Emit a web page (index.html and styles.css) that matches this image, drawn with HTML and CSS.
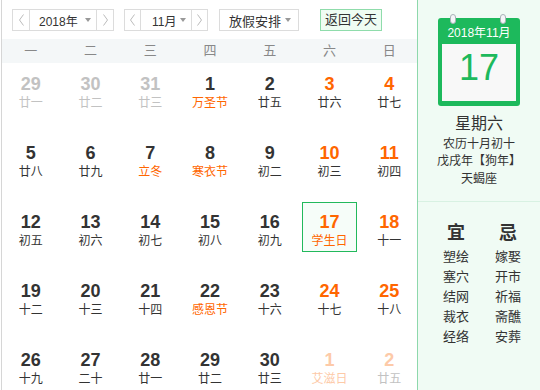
FILE: index.html
```html
<!DOCTYPE html>
<html lang="zh-CN">
<head>
<meta charset="utf-8">
<title>万年历</title>
<link rel="stylesheet" href="styles.css">
</head>
<body>
<div class="main">
  <div class="toolbar">
    <div class="sel sel-year">
      <span class="arr"><svg width="5" height="12" viewBox="0 0 5 12"><polyline points="4.5,0.5 0.5,6 4.5,11.5" fill="none" stroke="#bbb" stroke-width="1"/></svg></span>
      <span class="val">2018年<i class="caret"></i></span>
      <span class="arr"><svg width="5" height="12" viewBox="0 0 5 12"><polyline points="0.5,0.5 4.5,6 0.5,11.5" fill="none" stroke="#bbb" stroke-width="1"/></svg></span>
    </div>
    <div class="sel sel-month">
      <span class="arr"><svg width="5" height="12" viewBox="0 0 5 12"><polyline points="4.5,0.5 0.5,6 4.5,11.5" fill="none" stroke="#bbb" stroke-width="1"/></svg></span>
      <span class="val">11月<i class="caret"></i></span>
      <span class="arr"><svg width="5" height="12" viewBox="0 0 5 12"><polyline points="0.5,0.5 4.5,6 0.5,11.5" fill="none" stroke="#bbb" stroke-width="1"/></svg></span>
    </div>
    <div class="sel sel-holiday"><span class="val">放假安排<i class="caret"></i></span></div>
    <div class="today-btn">返回今天</div>
  </div>
  <div class="week">
    <span>一</span><span>二</span><span>三</span><span>四</span><span>五</span><span>六</span><span>日</span>
  </div>
  <div class="days">
    <div class="day other"><div class="num">29</div><div class="lun">廿一</div></div>
    <div class="day other"><div class="num">30</div><div class="lun">廿二</div></div>
    <div class="day other"><div class="num">31</div><div class="lun">廿三</div></div>
    <div class="day"><div class="num">1</div><div class="lun fest">万圣节</div></div>
    <div class="day"><div class="num">2</div><div class="lun">廿五</div></div>
    <div class="day wkend"><div class="num">3</div><div class="lun">廿六</div></div>
    <div class="day wkend"><div class="num">4</div><div class="lun">廿七</div></div>

    <div class="day"><div class="num">5</div><div class="lun">廿八</div></div>
    <div class="day"><div class="num">6</div><div class="lun">廿九</div></div>
    <div class="day"><div class="num">7</div><div class="lun fest">立冬</div></div>
    <div class="day"><div class="num">8</div><div class="lun fest">寒衣节</div></div>
    <div class="day"><div class="num">9</div><div class="lun">初二</div></div>
    <div class="day wkend"><div class="num">10</div><div class="lun">初三</div></div>
    <div class="day wkend"><div class="num">11</div><div class="lun">初四</div></div>

    <div class="day"><div class="num">12</div><div class="lun">初五</div></div>
    <div class="day"><div class="num">13</div><div class="lun">初六</div></div>
    <div class="day"><div class="num">14</div><div class="lun">初七</div></div>
    <div class="day"><div class="num">15</div><div class="lun">初八</div></div>
    <div class="day"><div class="num">16</div><div class="lun">初九</div></div>
    <div class="day wkend today"><div class="num">17</div><div class="lun fest">学生日</div></div>
    <div class="day wkend"><div class="num">18</div><div class="lun">十一</div></div>

    <div class="day"><div class="num">19</div><div class="lun">十二</div></div>
    <div class="day"><div class="num">20</div><div class="lun">十三</div></div>
    <div class="day"><div class="num">21</div><div class="lun">十四</div></div>
    <div class="day"><div class="num">22</div><div class="lun fest">感恩节</div></div>
    <div class="day"><div class="num">23</div><div class="lun">十六</div></div>
    <div class="day wkend"><div class="num">24</div><div class="lun">十七</div></div>
    <div class="day wkend"><div class="num">25</div><div class="lun">十八</div></div>

    <div class="day"><div class="num">26</div><div class="lun">十九</div></div>
    <div class="day"><div class="num">27</div><div class="lun">二十</div></div>
    <div class="day"><div class="num">28</div><div class="lun">廿一</div></div>
    <div class="day"><div class="num">29</div><div class="lun">廿二</div></div>
    <div class="day"><div class="num">30</div><div class="lun">廿三</div></div>
    <div class="day next wkend"><div class="num">1</div><div class="lun fest">艾滋日</div></div>
    <div class="day next wkend"><div class="num">2</div><div class="lun">廿五</div></div>
  </div>
</div>
<div class="side">
  <div class="side-top">
    <div class="card">
      <span class="ring ring-l"></span>
      <span class="ring ring-r"></span>
      <div class="card-head">2018年11月</div>
      <div class="card-body">17</div>
    </div>
    <div class="weekday">星期六</div>
    <div class="info">农历十月初十</div>
    <div class="info">戊戌年【狗年】</div>
    <div class="info">天蝎座</div>
  </div>
  <div class="side-bottom">
    <div class="col">
      <div class="col-head">宜</div>
      <div class="item">塑绘</div>
      <div class="item">塞穴</div>
      <div class="item">结网</div>
      <div class="item">裁衣</div>
      <div class="item">经络</div>
    </div>
    <div class="col">
      <div class="col-head">忌</div>
      <div class="item">嫁娶</div>
      <div class="item">开市</div>
      <div class="item">祈福</div>
      <div class="item">斋醮</div>
      <div class="item">安葬</div>
    </div>
  </div>
</div>
</body>
</html>
```
FILE: styles.css
```css
html, body {
  margin: 0;
  padding: 0;
  height: 100%;
}
body {
  display: flex;
  background: #fff;
  font-family: "Liberation Sans", "Noto Sans CJK SC", sans-serif;
  color: #333;
  overflow: hidden;
}
.main {
  margin-left: 1px;
  border-left: 1px solid #d6d6d6;
  width: 415px;
  flex: none;
}
.toolbar {
  display: flex;
  align-items: center;
  padding: 9px 0 0 10px;
  height: 22px;
  margin-bottom: 8px;
}
.sel {
  display: flex;
  height: 22px;
  box-sizing: border-box;
  border: 1px solid #dcdcdc;
  font-size: 12px;
  margin-right: 10px;
}
.arr {
  width: 16px;
  display: flex;
  align-items: center;
  justify-content: center;
}
.val {
  display: flex;
  align-items: center;
  border-left: 1px solid #dcdcdc;
  border-right: 1px solid #dcdcdc;
  box-sizing: border-box;
}
.sel-year .val {
  width: 68px;
  padding-left: 9px;
}
.sel-month .arr { width: 15px; }
.sel-month .val {
  width: 52px;
  padding-left: 11px;
}
.sel-month { margin-right: 11px; }
.sel-holiday { margin-right: 21px; }
.sel-holiday .val {
  border: none;
  width: 78px;
  padding-left: 9px;
  font-size: 13px;
}
.caret {
  width: 0;
  height: 0;
  border-left: 3.5px solid transparent;
  border-right: 3.5px solid transparent;
  border-top: 4px solid #999;
  margin-left: auto;
  margin-right: 5px;
}
.sel-holiday .caret { margin-right: 7px; }
.today-btn {
  height: 22px;
  box-sizing: border-box;
  width: 62px;
  border: 1px solid #8fdcab;
  background: #effcf3;
  font-size: 13px;
  line-height: 20px;
  text-align: center;
}
.week {
  display: grid;
  grid-template-columns: repeat(7, 55px);
  column-gap: 4.75px;
  padding-left: 1.25px;
  height: 24px;
  background: #f4f7f8;
  font-size: 13px;
  line-height: 24px;
  color: #888;
  text-align: center;
}
.days {
  display: grid;
  grid-template-columns: repeat(7, 55px);
  column-gap: 4.75px;
  row-gap: 19px;
  padding-left: 1.25px;
  padding-top: 1px;
}
.day {
  height: 50px;
  box-sizing: border-box;
  border: 1px solid transparent;
  padding-top: 10px;
  text-align: center;
}
.num {
  font-family: "Liberation Sans", sans-serif;
  font-weight: bold;
  font-size: 18px;
  line-height: 18px;
  color: #333;
}
.lun {
  font-family: "Noto Sans CJK SC", sans-serif;
  font-size: 12px;
  line-height: 18px;
  color: #333;
}
.wkend .num { color: #ff6600; }
.fest { color: #ff6600; }
.other .num, .other .lun { color: #c2c2c2; }
.next .num, .next .fest { color: #fdcaa8; }
.next .lun { color: #c2c2c2; }
.next .lun.fest { color: #fdcaa8; }
.today {
  border-color: #22b95c;
  background: #f6fdf9;
}
.side {
  flex: 1;
  border-left: 1px solid #8ed8ac;
  background: #f0fbf4;
  min-height: 390px;
}
.side-top {
  padding-top: 18px;
  padding-bottom: 15px;
  border-bottom: 1px solid #d8f1e2;
  text-align: center;
}
.card {
  position: relative;
  width: 82px;
  height: 88px;
  margin: 0 auto;
  background: #1db95c;
  border-radius: 3px;
  display: flex;
  flex-direction: column;
  padding: 0 4px 5px;
  box-sizing: border-box;
}
.ring {
  position: absolute;
  top: -4px;
  width: 6px;
  height: 10px;
  box-sizing: border-box;
  border: 1px solid #a9b2b8;
  border-radius: 3px;
  background: #f4f6f8;
}
.ring-l { left: 12px; }
.ring-r { left: 62px; }
.card-head {
  height: 26px;
  box-sizing: border-box;
  padding-top: 4px;
  line-height: 22px;
  font-size: 12px;
  color: #fff;
}
.card-body {
  flex: 1;
  background: #f8f8f8;
  font-family: "Liberation Sans", sans-serif;
  font-size: 36px;
  line-height: 48px;
  color: #1db95c;
}
.weekday {
  margin-top: 6px;
  font-family: "Noto Sans CJK SC", sans-serif;
  font-size: 16px;
  line-height: 20px;
}
.info {
  font-family: "Noto Sans CJK SC", sans-serif;
  font-size: 12px;
  line-height: 17.5px;
}
.weekday + .info { margin-top: 1.5px; }
.side-bottom {
  display: flex;
  justify-content: center;
  padding: 19px 0 0 6px;
}
.col {
  width: 52px;
  text-align: center;
  font-family: "Noto Sans CJK SC", sans-serif;
}
.col-head {
  font-size: 18px;
  font-weight: bold;
  line-height: 20px;
  margin-bottom: 5px;
}
.item {
  font-size: 13px;
  line-height: 20px;
}
```
